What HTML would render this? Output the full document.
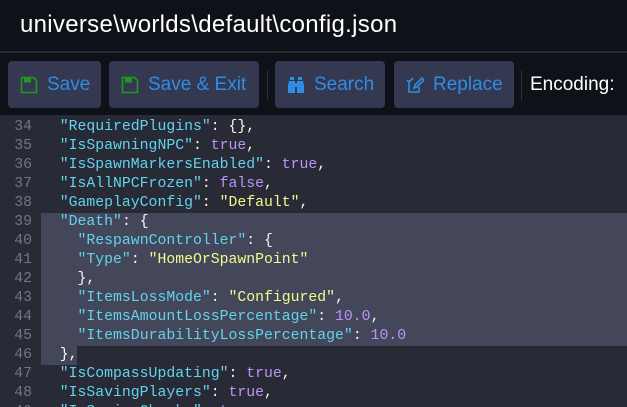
<!DOCTYPE html>
<html><head><style>
*{margin:0;padding:0;box-sizing:border-box}
html,body{width:627px;height:407px;overflow:hidden}
body{background:#0e1118;font-family:"Liberation Sans",sans-serif;position:relative}
.title{position:absolute;left:20px;top:11px;font-size:24px;color:#fff;white-space:nowrap;letter-spacing:0.3px}
.line{position:absolute;left:0;top:51px;width:627px;height:2px;background:#262a33}
.btn{position:absolute;top:61px;height:47px;background:#343850;border-radius:4px;color:#2f8de4;font-size:19px;display:flex;align-items:center;padding-left:12px;gap:9px;white-space:nowrap}
.sep{position:absolute;top:70px;width:1px;height:30px;background:#2c303a}
.enc{position:absolute;left:530px;top:74px;color:#fff;font-size:19px}
.editor{position:absolute;left:0;top:115px;width:627px;height:292px;background:#282a36;overflow:hidden}
.sel{position:absolute;background:#44475a}
.code{position:absolute;left:0;top:3px;font-family:"Liberation Mono",monospace;font-size:14.8px;line-height:19px;white-space:pre;color:#f8f8f2}
.n{display:inline-block;width:32px;text-align:right;color:#6f7688;margin-right:10px}
.k{color:#62d3ee}.s{color:#f1fa8c}.b{color:#bd93f9}
</style></head><body>
<div class="title">universe\worlds\default\config.json</div>
<div class="line"></div>
<div class="btn" style="left:8px;width:93px"><svg width="18" height="18" viewBox="0 0 18 18"><path d="M1.5 1.5h12l3 3v12h-15z" fill="none" stroke="#1f9a1f" stroke-width="1.6"/><rect x="4" y="1.5" width="7" height="5" fill="#1f9a1f"/></svg>Save</div>
<div class="btn" style="left:109px;width:150px"><svg width="18" height="18" viewBox="0 0 18 18"><path d="M1.5 1.5h12l3 3v12h-15z" fill="none" stroke="#1f9a1f" stroke-width="1.6"/><rect x="4" y="1.5" width="7" height="5" fill="#1f9a1f"/></svg>Save &amp; Exit</div>
<div class="sep" style="left:267px"></div>
<div class="btn" style="left:275px;width:110px"><svg width="18" height="18" viewBox="0 0 18 18" fill="#2f8de4"><rect x="3" y="1" width="4" height="3"/><rect x="11" y="1" width="4" height="3"/><path d="M2 5h6v12H1V9zM10 5h6l1 4v8h-7z"/><rect x="7" y="7" width="4" height="4"/></svg>Search</div>
<div class="btn" style="left:394px;width:120px"><svg width="18" height="18" viewBox="0 0 18 18" fill="none" stroke="#2f8de4" stroke-width="1.6"><path d="M3 5v11h10v-5"/><path d="M1 4l2 2 4-4"/><path d="M8 12l1-3 7-7 2 2-7 7z"/></svg>Replace</div>
<div class="sep" style="left:521px"></div>
<div class="enc">Encoding:</div>
<div class="editor">
<div class="sel" style="left:41px;top:98px;width:586px;height:133px"></div>
<div class="sel" style="left:41px;top:231px;width:36px;height:19px"></div>
<div class="code"><span class="n">34</span>  <span class="k">"RequiredPlugins"</span>: {},
<span class="n">35</span>  <span class="k">"IsSpawningNPC"</span>: <span class="b">true</span>,
<span class="n">36</span>  <span class="k">"IsSpawnMarkersEnabled"</span>: <span class="b">true</span>,
<span class="n">37</span>  <span class="k">"IsAllNPCFrozen"</span>: <span class="b">false</span>,
<span class="n">38</span>  <span class="k">"GameplayConfig"</span>: <span class="s">"Default"</span>,
<span class="n">39</span>  <span class="k">"Death"</span>: {
<span class="n">40</span>    <span class="k">"RespawnController"</span>: {
<span class="n">41</span>    <span class="k">"Type"</span>: <span class="s">"HomeOrSpawnPoint"</span>
<span class="n">42</span>    },
<span class="n">43</span>    <span class="k">"ItemsLossMode"</span>: <span class="s">"Configured"</span>,
<span class="n">44</span>    <span class="k">"ItemsAmountLossPercentage"</span>: <span class="b">10.0</span>,
<span class="n">45</span>    <span class="k">"ItemsDurabilityLossPercentage"</span>: <span class="b">10.0</span>
<span class="n">46</span>  },
<span class="n">47</span>  <span class="k">"IsCompassUpdating"</span>: <span class="b">true</span>,
<span class="n">48</span>  <span class="k">"IsSavingPlayers"</span>: <span class="b">true</span>,
<span class="n">49</span>  <span class="k">"IsSavingChunks"</span>: <span class="b">true</span>,</div>
</div>
</body></html>
